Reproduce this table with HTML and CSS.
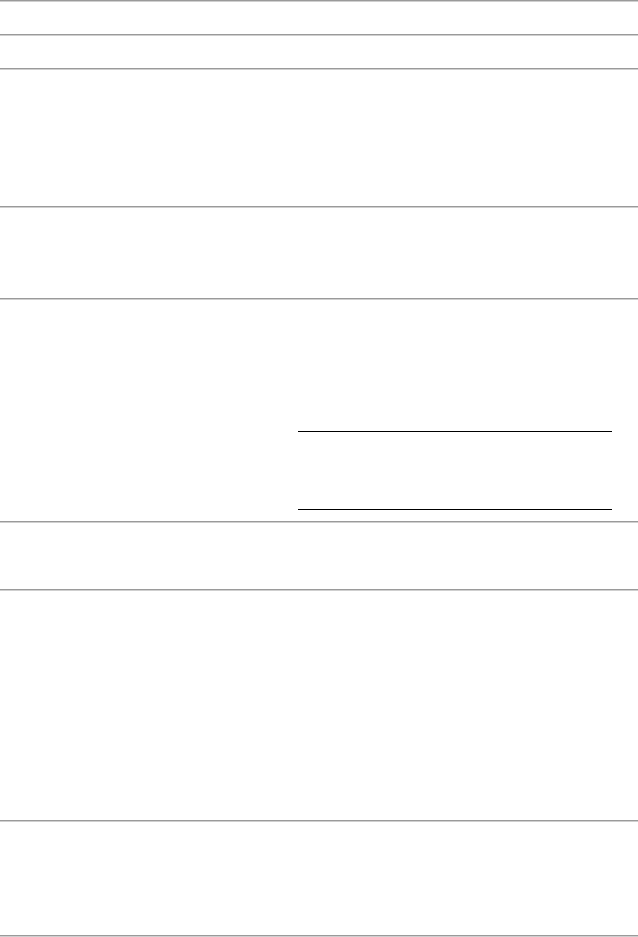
FILE: index.html
```html
<!DOCTYPE html>
<html>
<head>
<meta charset="utf-8">
<link rel="stylesheet" href="styles.css">
</head>
<body>
<div class="page">
  <hr class="rule">
  <div class="row r1"></div>
  <hr class="rule">
  <div class="row r2"></div>
  <hr class="rule">
  <div class="row r3"></div>
  <hr class="rule">
  <div class="row r4"></div>
  <hr class="rule">
  <div class="row r5">
    <div class="col-left"></div>
    <div class="col-right">
      <div class="boxed"></div>
    </div>
  </div>
  <hr class="rule">
  <div class="row r6"></div>
  <hr class="rule">
  <div class="row r7"></div>
  <hr class="rule">
  <div class="row r8"></div>
  <hr class="rule">
</div>
</body>
</html>
```

FILE: styles.css
```css
html, body {
  margin: 0;
  padding: 0;
  background: #ffffff;
  font-family: "Liberation Sans", Arial, sans-serif;
}
.page {
  width: 638px;
  display: flex;
  flex-direction: column;
}
.rule {
  margin: 0;
  height: 0;
  border: none;
  border-top: 1px solid #9a9a9a;
  border-bottom: 1px solid #cfcfcf;
}
.r1 { height: 32px; }
.r2 { height: 32px; }
.r3 { height: 136px; }
.r4 { height: 90px; }
.r5 {
  height: 221px;
  display: grid;
  grid-template-columns: 298px 314px;
}
.col-right {
  padding-top: 131px;
}
.boxed {
  height: 77px;
  border-top: 1px solid #000;
  border-bottom: 1px solid #000;
}
.r6 { height: 66px; }
.r7 { height: 229px; }
.r8 { height: 113px; }
```
